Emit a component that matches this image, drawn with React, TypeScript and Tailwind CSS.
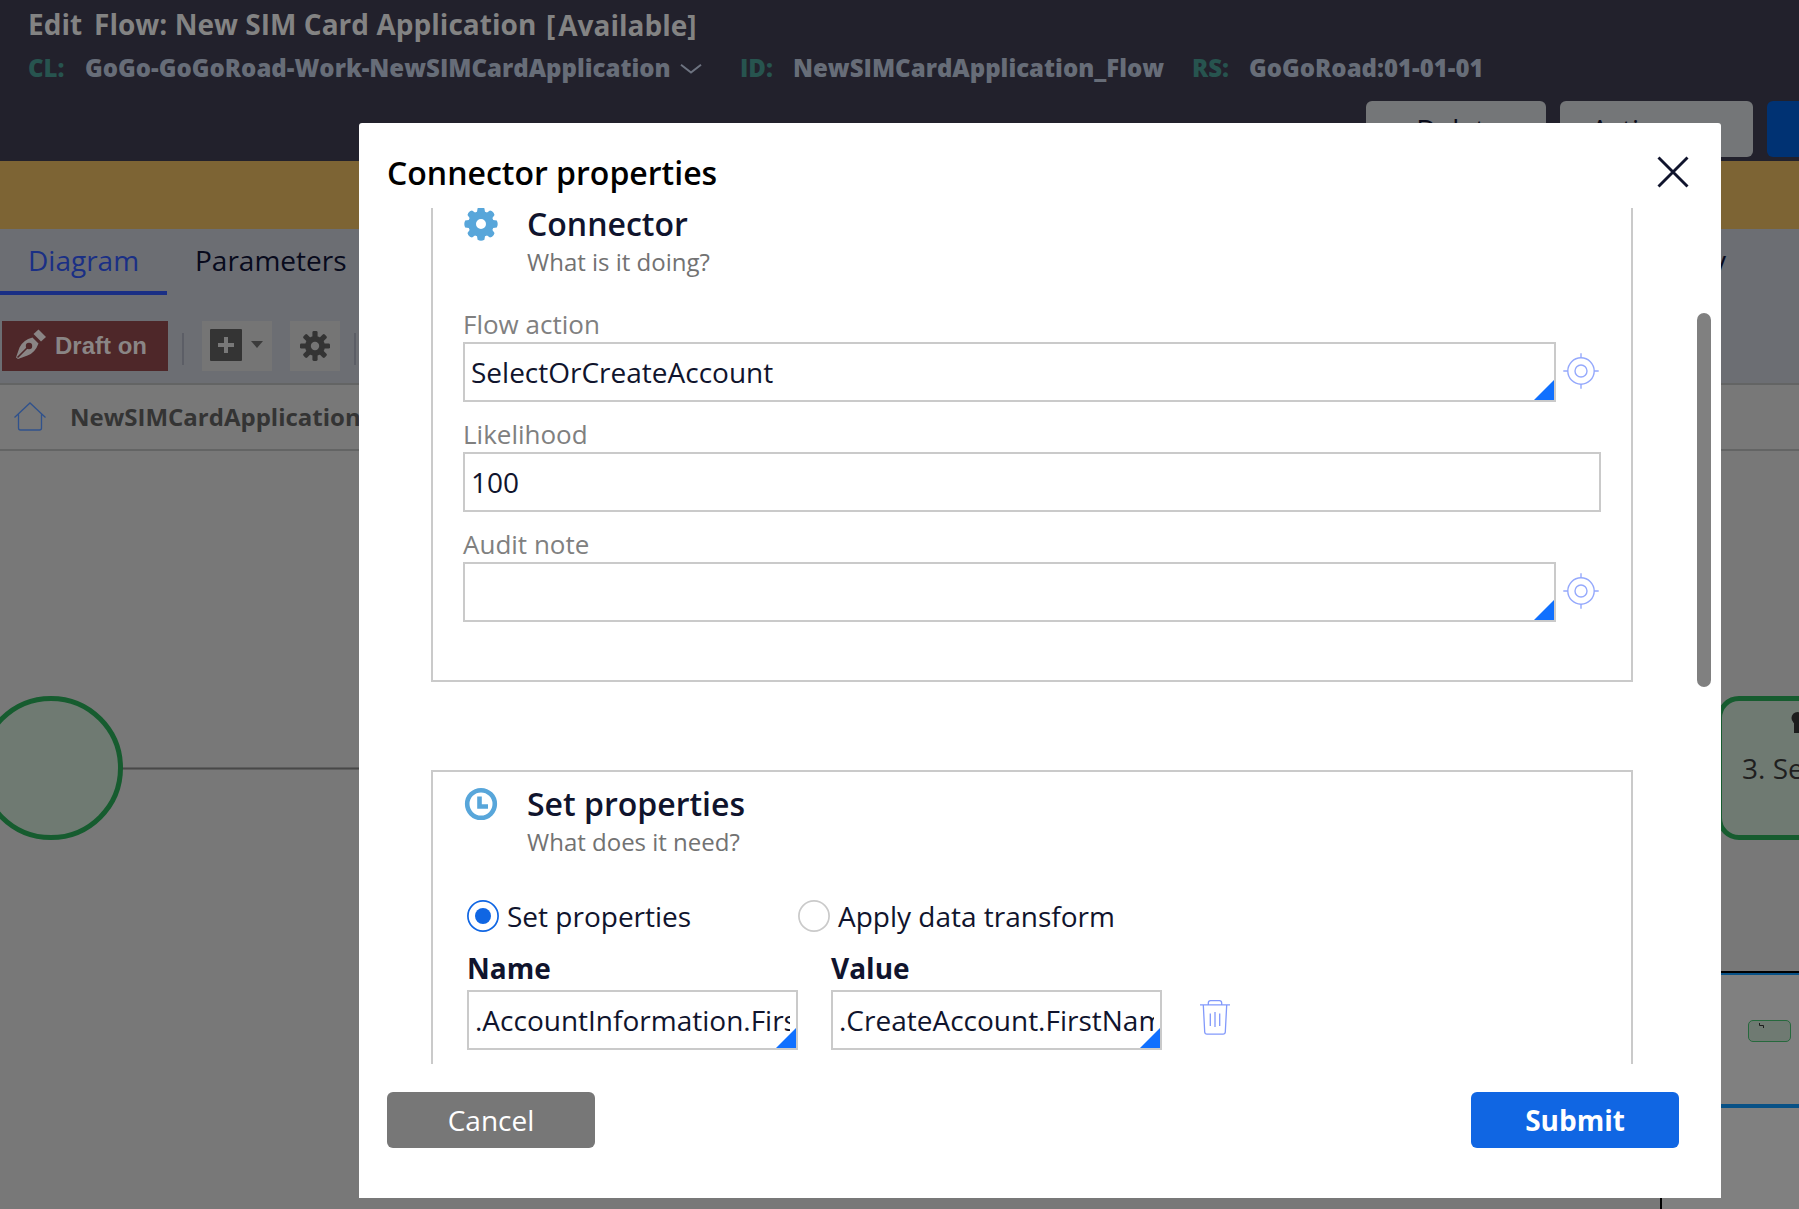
import React from "react";

function GearIcon({ className }: { className: string }) {
  return (
    <svg viewBox="0 0 34 34" className={className} fill="currentColor">
      <path
        fillRule="evenodd"
        d="M13.6 1.2Q17-.6 20.4 1.2L21 4.8 23 5.6 26 3.5Q29.6 4.4 30.5 8L28.4 11 29.2 13 32.8 13.6Q34.6 17 32.8 20.4L29.2 21 28.4 23 30.5 26Q29.6 29.6 26 30.5L23 28.4 21 29.2 20.4 32.8Q17 34.6 13.6 32.8L13 29.2 11 28.4 8 30.5Q4.4 29.6 3.5 26L5.6 23 4.8 21 1.2 20.4Q-.6 17 1.2 13.6L4.8 13 5.6 11 3.5 8Q4.4 4.4 8 3.5L11 5.6 13 4.8ZM17 12A5 5 0 1 0 17 22 5 5 0 1 0 17 12Z"
      />
    </svg>
  );
}

function CogIcon() {
  return (
    <svg viewBox="0 0 30 30" className="size-[30px]">
      <g fill="#343434">
        {[0, 45, 90, 135].map((a) => (
          <rect key={a} x="12.4" y="0" width="5.2" height="30" rx="1.4" transform={`rotate(${a} 15 15)`} />
        ))}
        <circle cx="15" cy="15" r="10" />
      </g>
      <circle cx="15" cy="15" r="4.2" fill="#757575" />
    </svg>
  );
}

function ClockIcon() {
  return (
    <svg viewBox="0 0 34 34" className="size-[34px]" fill="none" stroke="#58a6da">
      <circle cx="17" cy="17" r="13.8" strokeWidth="4.6" />
      <path d="M15.5 9.5V19.5H24" strokeWidth="4.6" />
    </svg>
  );
}

function TargetIcon() {
  return (
    <svg viewBox="0 0 36 36" className="size-9" fill="none" stroke="#95a9fc" strokeWidth="1.4">
      <circle cx="18" cy="18" r="13.2" />
      <circle cx="18" cy="18" r="6" />
      <path d="M18 .3V5M18 31V35.7M.3 18H5M31 18H35.7" />
    </svg>
  );
}

function TrashIcon() {
  return (
    <svg viewBox="0 0 30 35" className="h-[35px] w-[30px]" fill="none" stroke="#8299fb" strokeWidth="1.3">
      <path d="M0 4.9H30M8.3 4.5V3Q8.3.7 10.6.7H19.4Q21.7.7 21.7 3V4.5M3.3 5 4.7 32Q4.9 34.2 7 34.2H23Q25.1 34.2 25.3 32L26.7 5M10.3 13.5V26M15 12V27M19.7 13.5V26" />
    </svg>
  );
}

function Field({ value, className }: { value: string; className: string }) {
  return (
    <div className={`relative h-[60px] border-2 border-[#cacaca] bg-white pr-1.5 pl-1.5 ${className}`}>
      <div className="h-14 overflow-hidden text-[28px] leading-[57px] whitespace-nowrap text-[#10142d]">{value}</div>
      <svg viewBox="0 0 20 20" className="absolute right-0 bottom-0 size-5">
        <path d="M20 0V20H0Z" fill="#1070ff" />
      </svg>
    </div>
  );
}

function SectionTitle({ icon, title, hint }: { icon: React.ReactNode; title: string; hint: string }) {
  return (
    <div className="flex pt-3">
      <div className="mt-[3px] ml-px w-[63px]">{icon}</div>
      <div>
        <h3 className="text-[32px] leading-10 font-semibold text-[#10142d]">{title}</h3>
        <p className="mt-0.5 text-2xl leading-8 text-[#727272]">{hint}</p>
      </div>
    </div>
  );
}

function Label({ children }: { children: string }) {
  return <div className="h-9 text-[26px] leading-9 text-[#808080]">{children}</div>;
}

function Meta({ children, className }: { children: string; className: string }) {
  return <span className={`shrink-0 ${className}`}>{children}</span>;
}

function PageHeader() {
  return (
    <header className="h-[161px] bg-[#22212c] whitespace-nowrap">
      <h1 className="flex h-12 pl-7 text-[28px] leading-[48px] font-bold text-[#838383]">
        <span className="w-[66px]">Edit</span>
        <span className="w-[452px] tracking-[0.03px]">Flow: New SIM Card Application</span>
        <span className="pt-px">[</span>
        <span className="ml-[3px] pt-px">Available]</span>
      </h1>
      <div className="flex h-10 pl-7 text-2xl leading-10 font-extrabold text-[#676d78]">
        <Meta className="w-[57px] text-[#27544f]">CL:</Meta>
        <Meta className="w-[595px]">GoGo-GoGoRoad-Work-NewSIMCardApplication</Meta>
        <svg viewBox="0 0 22 10" className="mt-4 mr-[38px] h-2.5 w-[22px]" fill="none" stroke="#6d7380" strokeWidth="2">
          <path d="M1 .8 11 8.6 21 .8" />
        </svg>
        <Meta className="w-[53px] text-[#27544f]">ID:</Meta>
        <Meta className="w-[399px]">NewSIMCardApplication_Flow</Meta>
        <Meta className="w-[57px] text-[#27544f]">RS:</Meta>
        <Meta className="">GoGoRoad:01-01-01</Meta>
      </div>
      <div className="ml-[1366px] flex pt-[13px] text-[28px] leading-[56px] text-[#0a0c1a]">
        <div className="mr-3.5 h-14 w-[180px] shrink-0 rounded-md bg-[#747678] pl-[5px] text-center">Delete</div>
        <div className="mr-3.5 h-14 w-[193px] shrink-0 rounded-md bg-[#747678] pl-[31px]">Actions</div>
        <div className="h-14 w-40 shrink-0 rounded-md bg-[#003273]" />
      </div>
    </header>
  );
}

function Tabs() {
  return (
    <nav className="flex h-[66px] text-[28px] leading-[62px] text-[#080a1c]">
      <div className="w-[167px] border-b-4 border-[#1a2f85] pl-7 text-[#1a2f85]">Diagram</div>
      <div className="ml-7 flex-1">Parameters</div>
      <div className="w-[380px] pr-[73px] text-right">History</div>
    </nav>
  );
}

function Toolbar() {
  return (
    <div className="flex h-[88px] pt-[26px]">
      <div className="ml-0.5 flex h-[50px] w-[166px] bg-[#4e2729]">
        <svg viewBox="0 0 30 30" className="mt-2 ml-3.5 size-[30px]">
          <path d="M0 28.5 3.5 18.5Q7 11 16.5 8.5L22.5 14.5Q19 24 11.5 26.5L2 30Z" fill="#8a8585" />
          <path d="M17.5 5 22.5 .5 30 8 25 12.5Z" fill="#8a8585" />
          <path d="M1.5 28.5 12 18" stroke="#4e2729" strokeWidth="1.6" />
          <circle cx="13" cy="17" r="3.2" fill="#4e2729" />
        </svg>
        <span className="ml-[9px] font-['Liberation_Sans'] text-2xl leading-[49px] font-bold whitespace-nowrap text-[#8a8585]">
          Draft on
        </span>
      </div>
      <div className="mt-3 ml-3.5 h-8 w-0.5 bg-[#5c5e66]" />
      <div className="ml-[18px] flex h-[50px] w-[70px] bg-[#757575] pt-2 pl-2">
        <svg viewBox="0 0 32 32" className="size-8">
          <rect width="32" height="32" rx="1" fill="#343434" />
          <path d="M16 8V24M8 16H24" stroke="#787878" strokeWidth="4" />
        </svg>
        <svg viewBox="0 0 12 7" className="mt-3 ml-[9px] h-[7px] w-3">
          <path d="M0 0H12L6 7Z" fill="#3c3c3c" />
        </svg>
      </div>
      <div className="ml-[18px] h-[50px] w-[50px] bg-[#757575] p-2.5">
        <CogIcon />
      </div>
      <div className="mt-3 ml-3.5 h-8 w-0.5 bg-[#5c5e66]" />
    </div>
  );
}

function Breadcrumb() {
  return (
    <div className="flex h-[68px] border-y-2 border-[#636464] bg-[#787878]">
      <svg viewBox="0 0 32 29" className="mt-[17px] ml-3.5 h-[29px] w-8" fill="none" stroke="#30528c" strokeWidth="1.3">
        <path d="M.5 15.5 16 1 31.5 15.5M4.5 12V26Q4.5 28 6.5 28H25.5Q27.5 28 27.5 26V12" />
      </svg>
      <span className="ml-6 text-2xl leading-[64px] font-bold text-[#343434]">NewSIMCardApplication_Flow</span>
    </div>
  );
}

function Canvas() {
  return (
    <main className="relative h-[758px] overflow-hidden bg-[#787878]">
      <div className="absolute top-[316px] left-[120px] h-[3px] w-[1600px] border-y border-[#5e5e5e] bg-[#484848]" />
      <div className="absolute top-[245px] left-[-21px] size-36 rounded-full border-[5px] border-[#165c2f] bg-[#6f7a72]" />
      <div className="absolute top-[245px] left-[1717px] h-36 w-[220px] rounded-[22px] border-[5px] border-[#165c2f] bg-[#6f7a72]">
        <svg viewBox="0 0 30 24" className="absolute top-[11px] left-[69px] h-6 w-[30px]" fill="#1d1d1d">
          <circle cx="6.5" cy="6" r="6" />
          <rect x="3" y="11" width="20" height="10" />
        </svg>
        <span className="absolute top-[47px] left-5 text-[28px] leading-10 whitespace-nowrap text-[#1f1f1f]">
          3. Select
        </span>
      </div>
      <div className="absolute top-[520px] left-[1660px] h-[260px] w-[200px] border-t-2 border-l-2 border-black bg-[#808080]">
        <div className="h-[135px] border-t-2 border-b-4 border-[#085186] pt-[45px] pl-[86px]">
          <div className="relative h-[22px] w-[43px] rounded-[5px] border border-[#26693d] bg-[#6f7a72]">
            <svg viewBox="0 0 6 5" className="absolute top-0.5 left-2.5 h-[5px] w-1.5" fill="none" stroke="#1d1d1d">
              <path d="M.5 0V2.5H4.5V5" />
            </svg>
          </div>
        </div>
      </div>
    </main>
  );
}

function Radio({ checked, children }: { checked: boolean; children: string }) {
  return (
    <div className="flex w-[331px] items-center">
      <svg viewBox="0 0 32 32" className="size-8">
        <circle cx="16" cy="16" r="15.1" fill="white" stroke={checked ? "#1066e3" : "#cacaca"} strokeWidth="1.7" />
        {checked && <circle cx="16" cy="16" r="8" fill="#1066e3" />}
      </svg>
      <span className="ml-2 text-[28px] leading-8 whitespace-nowrap text-[#10142d]">{children}</span>
    </div>
  );
}

function Modal() {
  return (
    <section className="absolute top-[123px] left-[359px] flex h-[1075px] w-[1362px] flex-col rounded-t-[3px] bg-white">
      <div className="flex h-[85px] shrink-0 justify-between pt-[30px] pr-8 pl-7">
        <h2 className="text-[32px] leading-10 font-semibold text-black">Connector properties</h2>
        <svg viewBox="0 0 32 32" className="mt-[3px] size-8" fill="none" stroke="#10142d" strokeWidth="2.9">
          <path d="M1.5 1.5 30.5 30.5M30.5 1.5 1.5 30.5" />
        </svg>
      </div>
      <div className="relative h-[856px] shrink-0 overflow-hidden pl-[72px]">
        <div className="-mt-[18px] h-[492px] w-[1202px] border-2 border-[#cacaca] pl-[30px]">
          <SectionTitle
            icon={<GearIcon className="size-[34px] text-[#58a6da]" />}
            title="Connector"
            hint="What is it doing?"
          />
          <div className="mt-7">
            <Label>Flow action</Label>
            <div className="flex">
              <Field value="SelectOrCreateAccount" className="w-[1093px]" />
              <div className="mt-[10.5px] ml-[7px]">
                <TargetIcon />
              </div>
            </div>
          </div>
          <div className="mt-3.5">
            <Label>Likelihood</Label>
            <div className="h-[60px] w-[1138px] border-2 border-[#cacaca] pl-1.5 text-[28px] leading-[57px] text-[#10142d]">
              100
            </div>
          </div>
          <div className="mt-3.5">
            <Label>Audit note</Label>
            <div className="flex">
              <Field value="" className="w-[1093px]" />
              <div className="mt-[10.5px] ml-[7px]">
                <TargetIcon />
              </div>
            </div>
          </div>
        </div>
        <div className="mt-[88px] h-[400px] w-[1202px] border-2 border-[#cacaca] pl-[30px]">
          <SectionTitle icon={<ClockIcon />} title="Set properties" hint="What does it need?" />
          <div className="mt-[42px] flex pl-1">
            <Radio checked>Set properties</Radio>
            <Radio checked={false}>Apply data transform</Radio>
          </div>
          <div className="mt-[18px] flex pl-1 text-[28px] leading-9 font-bold text-[#10142d]">
            <div className="w-[364px]">Name</div>
            <div>Value</div>
          </div>
          <div className="mt-1 flex pl-1">
            <Field value=".AccountInformation.FirstName" className="mr-[33px] w-[331px]" />
            <Field value=".CreateAccount.FirstName" className="mr-[38px] w-[331px]" />
            <div className="mt-2.5">
              <TrashIcon />
            </div>
          </div>
        </div>
        <div className="absolute top-[105px] right-2.5 h-[374px] w-3.5 rounded-full bg-[#808080]" />
      </div>
      <div className="mt-7 flex justify-between pr-[42px] pl-7 text-[28px] leading-[57px] text-white">
        <button className="h-14 w-52 rounded-md bg-[#777777]">Cancel</button>
        <button className="h-14 w-52 rounded-md bg-[#1066e3] font-bold">Submit</button>
      </div>
    </section>
  );
}

export default function App() {
  return (
    <div className="relative h-[1209px] w-full overflow-hidden bg-[#6c6e73] font-['Open_Sans',sans-serif]">
      <PageHeader />
      <div className="h-[68px] bg-[#7d6434]" />
      <Tabs />
      <Toolbar />
      <Breadcrumb />
      <Canvas />
      <Modal />
    </div>
  );
}
